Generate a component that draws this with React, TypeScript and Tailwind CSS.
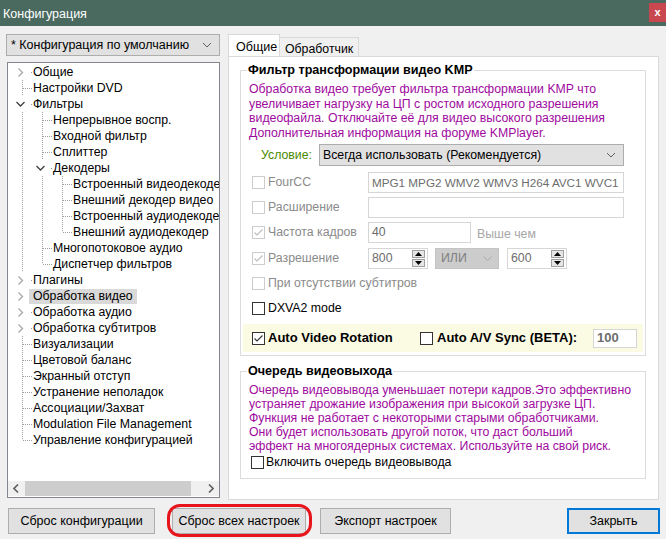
import clsx from "clsx";

type Row = {
  label: string;
  depth: number;
  guides: number[];
  last?: boolean;
  kids?: "open" | "closed";
  sel?: boolean;
};

const rows: Row[] = [
  { label: "Общие", depth: 0, guides: [], kids: "closed" },
  { label: "Настройки DVD", depth: 0, guides: [] },
  { label: "Фильтры", depth: 0, guides: [], kids: "open" },
  { label: "Непрерывное воспр.", depth: 1, guides: [0] },
  { label: "Входной фильтр", depth: 1, guides: [0] },
  { label: "Сплиттер", depth: 1, guides: [0] },
  { label: "Декодеры", depth: 1, guides: [0], kids: "open" },
  { label: "Встроенный видеодекодер", depth: 2, guides: [0, 1] },
  { label: "Внешний декодер видео", depth: 2, guides: [0, 1] },
  { label: "Встроенный аудиодекодер", depth: 2, guides: [0, 1] },
  { label: "Внешний аудиодекодер", depth: 2, guides: [0, 1], last: true },
  { label: "Многопотоковое аудио", depth: 1, guides: [0] },
  { label: "Диспетчер фильтров", depth: 1, guides: [0], last: true },
  { label: "Плагины", depth: 0, guides: [], kids: "closed" },
  { label: "Обработка видео", depth: 0, guides: [], kids: "closed", sel: true },
  { label: "Обработка аудио", depth: 0, guides: [], kids: "closed" },
  { label: "Обработка субтитров", depth: 0, guides: [], kids: "closed" },
  { label: "Визуализации", depth: 0, guides: [] },
  { label: "Цветовой баланс", depth: 0, guides: [] },
  { label: "Экранный отступ", depth: 0, guides: [] },
  { label: "Устранение неполадок", depth: 0, guides: [] },
  { label: "Ассоциации/Захват", depth: 0, guides: [] },
  { label: "Modulation File Management", depth: 0, guides: [] },
  { label: "Управление конфигурацией", depth: 0, guides: [], last: true },
];

const DOT = "#a0a0a0";

function Chevron({ className }: { className?: string }) {
  return (
    <svg width="10" height="6" viewBox="0 0 10 6" className={className}>
      <path d="M1 1 L5 5 L9 1" fill="none" stroke="#606060" strokeWidth="1" />
    </svg>
  );
}

function TreeRow({ row, first }: { row: Row; first: boolean }) {
  const guides = [];
  for (let i = 0; i < row.depth; i++) {
    guides.push(
      <svg key={i} width="20" height="16" className="shrink-0">
        {row.guides.includes(i) && (
          <line x1="9.5" y1="0" x2="9.5" y2="16" stroke={DOT} strokeDasharray="1 1" />
        )}
      </svg>
    );
  }
  return (
    <div className="flex h-[16px] items-center whitespace-nowrap">
      {guides}
      <svg width="20" height="16" className="shrink-0">
        {!first && <line x1="9.5" y1="0" x2="9.5" y2="8" stroke={DOT} strokeDasharray="1 1" />}
        {!row.last && <line x1="9.5" y1="8" x2="9.5" y2="16" stroke={DOT} strokeDasharray="1 1" />}
        <line x1="10" y1="8.5" x2="20" y2="8.5" stroke={DOT} strokeDasharray="1 1" />
        {row.kids && <rect x="1" y="0" width="17" height="16" fill="#fff" />}
        {row.kids === "closed" && (
          <path d="M5.5 4.5 L9.5 8.5 L5.5 12.5" fill="none" stroke="#a6a6a6" strokeWidth="1.3" />
        )}
        {row.kids === "open" && (
          <path d="M3.5 6 L7.5 10 L11.5 6" fill="none" stroke="#404040" strokeWidth="1.3" />
        )}
      </svg>
      <span
        className={clsx(
          "-ml-[4px] px-[4px] leading-[15px]",
          row.sel && "bg-[#d9d9d9]"
        )}
      >
        {row.label}
      </span>
    </div>
  );
}

function Box({ checked, disabled }: { checked?: boolean; disabled?: boolean }) {
  return (
    <span
      className={clsx(
        "flex h-[13px] w-[13px] shrink-0 items-center justify-center border bg-white",
        disabled ? "border-[#cccccc]" : "border-[#333333]"
      )}
    >
      {checked && (
        <svg width="11" height="11" viewBox="0 0 11 11">
          <path
            d="M1.5 5.5 L4 8 L9.5 2.5"
            fill="none"
            stroke={disabled ? "#bcbcbc" : "#333333"}
            strokeWidth="1.1"
          />
        </svg>
      )}
    </span>
  );
}

function Spin() {
  return (
    <div className="flex flex-col gap-[1px]">
      <span className="flex h-[8px] w-[13px] items-center justify-center border border-[#a0a0a0] bg-[#e6e6e6]">
        <svg width="7" height="4">
          <path d="M0 4 L3.5 0 L7 4Z" fill="#000" />
        </svg>
      </span>
      <span className="flex h-[8px] w-[13px] items-center justify-center border border-[#a0a0a0] bg-[#e6e6e6]">
        <svg width="7" height="4">
          <path d="M0 0 L3.5 4 L7 0Z" fill="#000" />
        </svg>
      </span>
    </div>
  );
}

function OptRow({
  label,
  checked,
  className,
  children,
}: {
  label: string;
  checked?: boolean;
  className?: string;
  children?: React.ReactNode;
}) {
  return (
    <div className={clsx("flex h-[21px] items-center pl-[11px]", className)}>
      <Box disabled checked={checked} />
      <span className="ml-[3px] w-[100px] text-[#8a8a8a]">{label}</span>
      {children}
    </div>
  );
}

function Field({ className, children }: { className?: string; children?: React.ReactNode }) {
  return (
    <div
      className={clsx(
        "flex h-[21px] items-center overflow-hidden whitespace-nowrap border border-[#d6d6d6] bg-white pl-[3px] pr-[2px] text-[#6d6d6d]",
        className
      )}
    >
      {children}
    </div>
  );
}

function Group({
  title,
  className,
  children,
}: {
  title: string;
  className?: string;
  children: React.ReactNode;
}) {
  return (
    <div className={clsx("relative ml-[11px] w-[406px] border border-[#dcdcdc]", className)}>
      <span className="absolute -top-[9px] left-[6px] bg-white px-[1px] text-[12.6px] font-bold leading-[16px]">
        {title}
      </span>
      {children}
    </div>
  );
}

const PURPLE = "text-[#9e0a9e]";

export default function App() {
  return (
    <div className="relative flex h-[539px] w-[666px] flex-col overflow-hidden bg-[#f0f0f0] font-['Liberation_Sans',Arial,sans-serif] text-[12.3px] text-black">
      {/* title bar */}
      <div className="flex h-[26px] shrink-0 items-start bg-[#4a6a5f]">
        <span className="ml-[3px] mt-[5px] text-[12.5px] text-white">Конфигурация</span>
        <span className="ml-auto mt-[3px] flex h-[19px] w-[17px] items-center justify-center bg-[#c9474f] text-[11px] font-bold text-white">
          x
        </span>
      </div>

      <div className="flex h-[474px] shrink-0 pt-[8px]">
        {/* left */}
        <div className="ml-[6px] flex w-[214px] flex-col">
          <div className="flex h-[22px] items-center border border-[#adadad] bg-[#e1e1e1] pl-[4px] pr-[7px] text-[12.5px]">
            <span>* Конфигурация по умолчанию</span>
            <Chevron className="ml-auto" />
          </div>
          <div className="ml-[1px] mt-[6px] flex h-[436px] w-[213px] flex-col overflow-hidden border border-[#828790] bg-white">
            <div className="flex-1 overflow-hidden pl-[5px] pt-[1px]">
              {rows.map((r, i) => (
                <TreeRow key={r.label} row={r} first={i === 0} />
              ))}
            </div>
            <div className="mb-[1px] flex h-[15px] items-center bg-[#f0f0f0]">
              <svg width="6" height="9" className="ml-[5px]">
                <path d="M5 0.5 L1 4.5 L5 8.5" fill="none" stroke="#606060" strokeWidth="1.6" />
              </svg>
              <span className="ml-[6px] h-[15px] w-[166px] bg-[#cdcdcd]" />
              <svg width="6" height="9" className="ml-auto mr-[5px]">
                <path d="M1 0.5 L5 4.5 L1 8.5" fill="none" stroke="#606060" strokeWidth="1.6" />
              </svg>
            </div>
          </div>
        </div>

        {/* right */}
        <div className="ml-[8px] flex w-[431px] flex-col pt-[1px]">
          <div className="flex h-[21px] items-end">
            <div className="relative z-10 flex h-[22px] w-[52px] items-start border border-b-0 border-[#d9d9d9] bg-white pl-[7px] pt-[3px] text-[12.5px]">
              Общие
            </div>
            <div className="flex h-[19px] items-start border border-b-0 border-l-0 border-[#d9d9d9] bg-[#f0f0f0] px-[5px] pt-[2px] text-[12.3px]">
              Обработчик
            </div>
          </div>
          <div className="h-[444px] border border-[#d9d9d9] bg-white pt-[13px]">
            <Group title="Фильтр трансформации видео KMP" className="h-[286px]">
              <div className={clsx("pl-[8px] pt-[11px] leading-[14.5px] whitespace-nowrap", PURPLE)}>
                Обработка видео требует фильтра трансформации KMP что
                <br />
                увеличивает нагрузку на ЦП с ростом исходного разрешения
                <br />
                видеофайла. Отключайте её для видео высокого разрешения
                <br />
                Дополнительная информация на форуме KMPlayer.
              </div>
              <div className="mt-[4px] flex h-[22px] items-center pl-[20px]">
                <span className="w-[58px] text-[#4b8b00]">Условие:</span>
                <div className="flex h-[22px] w-[305px] items-center border border-[#adadad] bg-[#e1e1e1] pl-[3px] pr-[7px]">
                  <span>Всегда использовать (Рекомендуется)</span>
                  <Chevron className="ml-auto" />
                </div>
              </div>
              <OptRow label="FourCC" className="mt-[6px]">
                <Field className="w-[256px] text-[11.7px]">MPG1 MPG2 WMV2 WMV3 H264 AVC1 WVC1</Field>
              </OptRow>
              <OptRow label="Расширение" className="mt-[4px]">
                <Field className="w-[256px]" />
              </OptRow>
              <OptRow label="Частота кадров" checked className="mt-[4px]">
                <Field className="w-[103px]">40</Field>
                <span className="ml-[6px] mt-[3px] text-[#a6a6a6]">Выше чем</span>
              </OptRow>
              <OptRow label="Разрешение" checked className="mt-[5px]">
                <Field className="w-[60px]">
                  <span>800</span>
                  <span className="ml-auto">
                    <Spin />
                  </span>
                </Field>
                <div className="ml-[7px] flex h-[21px] w-[64px] items-center border border-[#c4c4c4] bg-[#cccccc] pl-[5px] pr-[6px] text-[#7e7e7e]">
                  <span>ИЛИ</span>
                  <svg width="9" height="5" className="ml-auto">
                    <path d="M0.5 0.5 L4.5 4.5 L8.5 0.5" fill="none" stroke="#a8a8a8" strokeWidth="1" />
                  </svg>
                </div>
                <Field className="ml-[8px] w-[60px]">
                  <span>600</span>
                  <span className="ml-auto">
                    <Spin />
                  </span>
                </Field>
              </OptRow>
              <div className="mt-[4px] flex h-[20px] items-center pl-[11px]">
                <Box disabled />
                <span className="ml-[3px] text-[#8a8a8a]">При отсутствии субтитров</span>
              </div>
              <div className="mt-[5px] flex h-[20px] items-center pl-[11px]">
                <Box />
                <span className="ml-[3px]">DXVA2 mode</span>
              </div>
              <div className="ml-[2px] mt-[6px] flex h-[28px] w-[400px] items-center bg-[#fbfbe4] pl-[9px] text-[13px] font-bold">
                <Box checked />
                <span className="ml-[3px] w-[152px]">Auto Video Rotation</span>
                <Box />
                <span className="ml-[4px]">Auto A/V Sync (BETA):</span>
                <div className="ml-auto mr-[6px] flex h-[19px] w-[44px] items-center border border-[#d6d6d6] bg-white pl-[3px] text-[#6d6d6d]">
                  100
                </div>
              </div>
            </Group>

            <Group title="Очередь видеовыхода" className="mt-[15px] h-[108px]">
              <div className={clsx("pl-[8px] pt-[11px] leading-[14px] whitespace-nowrap", PURPLE)}>
                Очередь видеовывода уменьшает потери кадров.Это эффективно
                <br />
                устраняет дрожание изображения при высокой загрузке ЦП.
                <br />
                Функция не работает с некоторыми старыми обработчиками.
                <br />
                Они будет использовать другой поток, что даст больший
                <br />
                эффект на многоядерных системах. Используйте на свой риск.
              </div>
              <div className="mt-[1px] flex h-[16px] items-center pl-[10px]">
                <Box />
                <span className="ml-[2px]">Включить очередь видеовывода</span>
              </div>
            </Group>
          </div>
        </div>
      </div>

      {/* buttons */}
      <div className="mt-[8px] flex h-[26px] shrink-0 pl-[8px] text-[12.5px]">
        <button className="w-[147px] border border-[#adadad] bg-[#e1e1e1]">Сброс конфигурации</button>
        <button className="relative ml-[17px] w-[134px] border border-[#adadad] bg-[#e1e1e1]">
          Сброс всех настроек
          <span className="absolute -bottom-[4px] -left-[6px] -right-[7px] -top-[5px] rounded-[13px] border-[3px] border-[#e8141c]" />
        </button>
        <button className="ml-[14px] w-[131px] border border-[#adadad] bg-[#e1e1e1]">Экспорт настроек</button>
        <button className="ml-[116px] w-[93px] border-2 border-[#0078d7] bg-[#e1e1e1]">Закрыть</button>
      </div>
    </div>
  );
}
